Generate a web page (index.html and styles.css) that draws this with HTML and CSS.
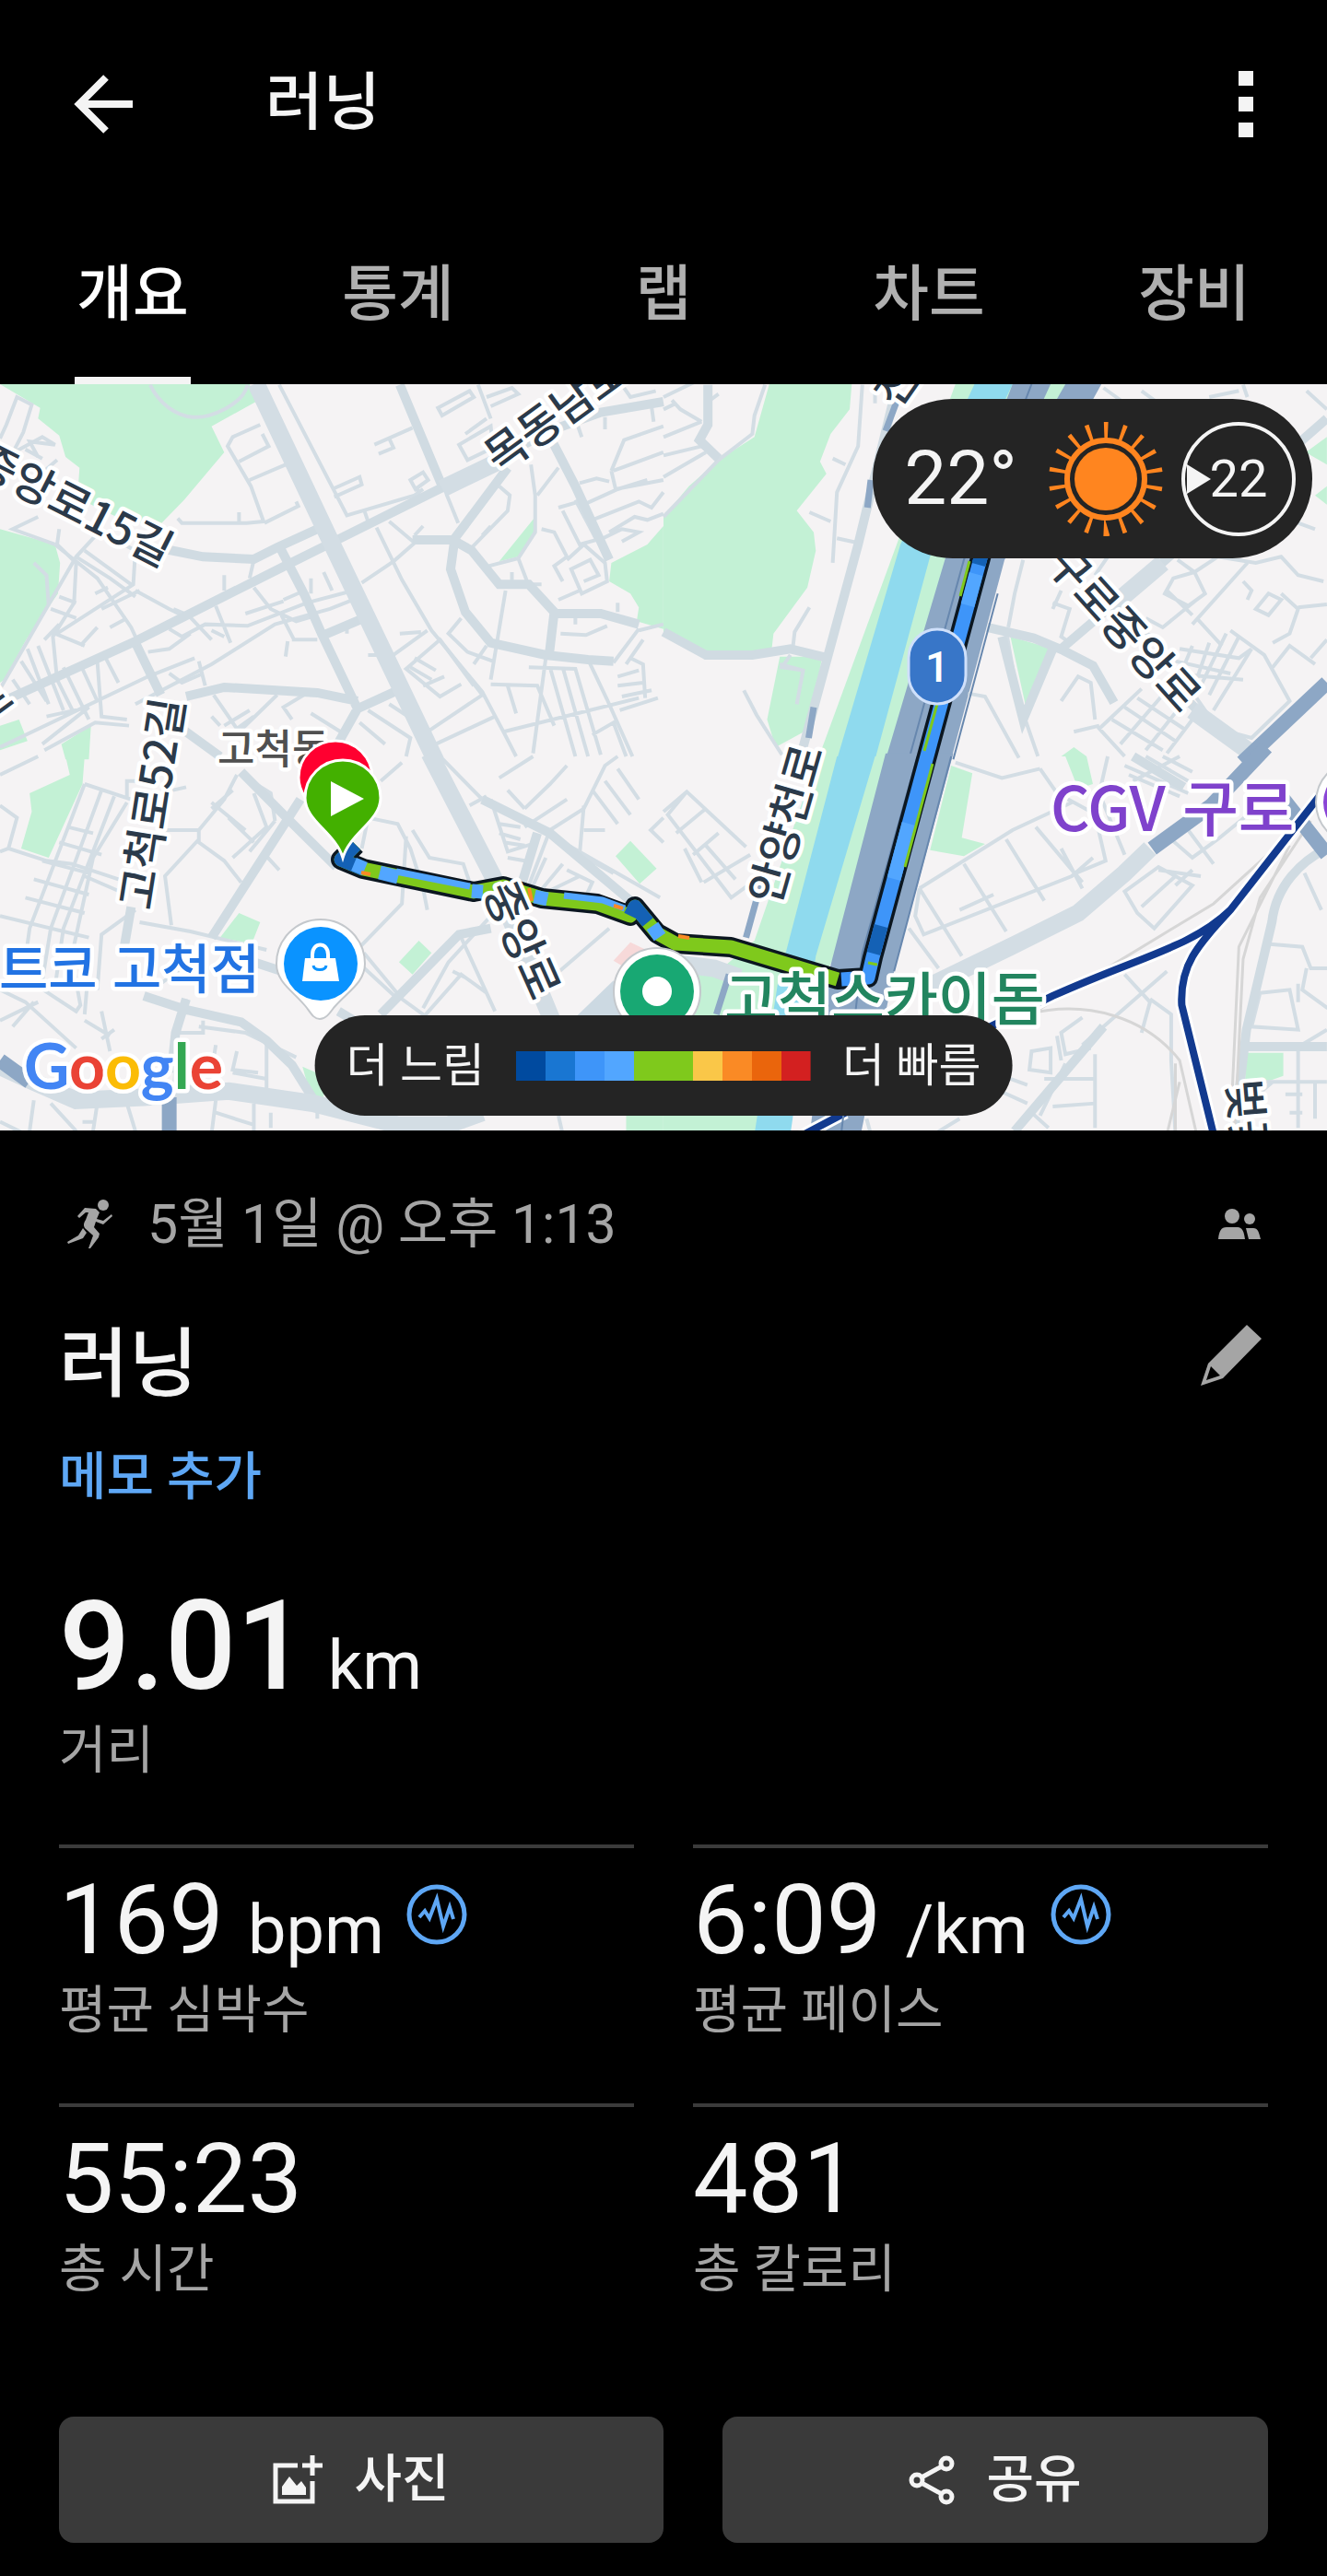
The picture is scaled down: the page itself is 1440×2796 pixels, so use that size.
FILE: index.html
```html
<!DOCTYPE html>
<html lang="ko">
<head>
  <meta charset="UTF-8">
  <meta name="viewport" content="width=device-width, initial-scale=1">
  <title>러닝</title>
  <link rel="stylesheet" href="styles.css">
</head>
<body>
  <header class="app-bar">
    <button class="icon-btn" aria-label="뒤로">
      <svg width="64" height="64" viewBox="0 0 64 64" fill="none" stroke="#f4f4f4" stroke-width="8">
        <path d="M64 32H6M35 3L6 32l29 29"/>
      </svg>
    </button>
    <h1 class="app-title">러닝</h1>
    <button class="icon-btn" aria-label="더보기">
      <svg width="16" height="72" viewBox="0 0 16 72" fill="#f4f4f4">
        <path d="M0 0h16v16H0zM0 28h16v16H0zM0 56h16v16H0z"/>
      </svg>
    </button>
  </header>

  <nav class="tabs">
    <a href="#" class="tab active"><span>개요</span></a>
    <a href="#" class="tab"><span>통계</span></a>
    <a href="#" class="tab"><span>랩</span></a>
    <a href="#" class="tab"><span>차트</span></a>
    <a href="#" class="tab"><span>장비</span></a>
  </nav>

  <section class="map">
    <svg class="map-canvas" viewBox="0 0 1440 810">
      <rect width="1440" height="810" fill="#f5f3f4"/>

      <!-- north west -->
      <g transform="translate(0 -6) scale(.4591 .3333)">
        <g class="park">
          <path d="M0 18L95 95l-5 35 50 55 15 70 33 35-3 60 15 50 90 60 85 20 60-85 95-155-30-85 105-80-15-57z"/>
          <path d="M0 490l130 50 12 60-5 100-75 150-52 130-10 10z"/>
          <path d="M1568 480l-38 60-85 60-5 60 50 40 20 45-5 45 63 25z"/>
          <path d="M1265 450l-85 145 45-15 35-60zM0 1130l45-20 20 70-65 30zM145 1190l70-60-5 110h-55z"/>
        </g>
        <g class="road">
          <path d="M30 290l-5-35 30-80 20-90-35-25-25 90-15 45M20 250l80-60 30 25-60-10 20 50M60 230l40 30M80 330l55-65M355 20c20 60 60 100 100 105s120-40 130-105"/>
          <path d="M615 150l-65 40-12 30 55 130 30 115-40 5H430l-10-15M565 470v-35M620 180l15 40-70 50M675 280l-85 50M625 470l80-55-5-15"/>
          <path d="M660 20l160 425 160-65 20-20M785 360l65-40 5 25-65 40M975 160l-90 55M920 195l10 30-35 20M970 330l30-25 12 25-30 30zM985 350l5 30M860 425l10 40M890 485l60 170 70 165 120 200 50 130 30 80M920 465l60 70-50 60-75 70"/>
          <path d="M1035 95l75-55 10 20-75 60zM1130 20l30 110M1150 60l60-30 15 20-65 40M1085 215l75-60 5 70-60 40zM1100 180l50-50"/>
          <path d="M1255 280l10 100v120l-40 85-70 25M1320 290l-50 90M1180 350l25 30-5 50-85 120M1140 510l20-30M980 510l20-30M1225 585l25 90M1055 375l28 95"/>
          <path d="M1370 340l40-15 30 10M1450 300l118-60M1445 300l30-100 93-45M1445 300l10 60 113-30M1380 410l80-50 70-30M1400 460l110-60 30 20 28-50M1320 420l50-20M1330 430l40 110 40-15-50-130M1440 500l60-50 30 10 38-20M1410 530l60-40 40 10-40 30M1280 490l30 10 30 80-30 30 20 50M1340 590l40-50 50 60 5 60-60 40-25-80 45-30 20 50-35 20M1320 720l50-30M1540 90l5 50M1430 165v-40M1375 190l-10-40M1470 20l20 40 60-20"/>
          <path d="M1325 830l60 5 50-30M1360 800v-50M1460 760v-30M1195 690l-35 290M1210 660v-30M1280 670h-60M1510 820l58-20M1450 925l60-110M1390 915l45 130 60 185M1250 940l110 5 60 280M1300 940l60 290M1330 940l60 290M1290 910l-30 310M1460 970l50-20M1460 1000l60-10M1465 1080l90-40M1470 1035l70-20M1480 930l40-80M1490 910l30 20 5 110M1190 1150l320-110M1400 1160l50-40 30 110M1160 995l110 5 40 130M1200 1000l20 90M1030 1190l140-90M1010 1150l130-120-100-180-80 95 80 90 50-40M1040 850l80 150M980 910l50 40M970 940l50 40M1000 1000l50-30M1010 820l-80 80M1090 780l-30 50 45 60 60 30M1120 930l30-60M945 830l50-5M1020 1150l-100-90"/>
          <path d="M410 750l35 20 55 80M320 690l80 60 30 20M430 780M400 815l30 25 55-40 100 5 140-75 110-40M320 1060l180-130 150-130 130-50 55-30M600 680l40 70 60 40 50-20M690 850h60M675 905l5-50M665 770l30 80M580 765l90-40M670 720l50-30M530 640v50M590 650l10-60M765 630l20 60M735 650v50M510 740l35 120M500 820l30 20M690 1110l-20-40 60-50M505 1030l60 120 90-120M735 1090l70 60M870 1080l100 90-10 60M910 1190l-60-70M820 810v20M870 900h30"/>
          <path d="M0 1010L180 580l60-90M130 540l100 110 80 160 30 90M130 540l-100-50 60-40M140 490l-5 50 45 60-5 130-50 110 10 140 40 110M180 580l80 70 60 60M240 500l80 60-5 110-180 160M200 560l110 110M330 690l-90 60M80 600l30 40 5 100M120 750l60 30M140 710l40 20M105 850l35-50M130 830l70 40M230 810l-40 60M65 880l50 180M90 870l60 210M150 940l60 170M190 930l40 120M230 920l10 180 60 10M250 910l30 80M0 1200l350-230 110-60M30 980l40 80M50 920l60 130M110 1100l100-30-110 120M400 960l30 30 50-30M470 920l15 80M530 1130l60-50M560 1140l40-40M500 1100l20 30M260 810l40-30M225 700l30-20M350 890l50-10 50-50M105 1210l120-90 80 10"/>
        </g>
        <g class="road mid">
          <path d="M945 20l100 330M390 555l90 25 120 8 55-38 95-60M660 545l60 160 40 125 85 245M320 860l60 170M845 1075l95-60M845 1075l-45 110M440 1035l90-30 220 18 95 27M860 780l-95 55M1200 290l-125 230-10 100 35 140 60 100 130 40 100 15 60 5M975 525h95l45 35 65 110h70l60 90-12 140M1310 765h110l90 35M1300 190l60 160 80 240M430 1140l90 90"/>
          <path d="M1568 75l-148 35-120 60-255 185-255 175-110 75-360 250-320 200"/>
        </g>
        <path class="road wide" d="M1190 262L1045 358M605 15l175 510 250 720"/>
      </g>

      <!-- north east -->
      <g transform="translate(720 -6) scale(.4591 .3333)">
        <g class="park">
          <path d="M250 18h195l-5 82-45 80-25 90 15 40-70 120 40 70 5 60-20 120-80 150-5 60-155 10L0 825V450l60-100 70-85 85-75z"/>
          <path d="M275 905h100l-30 235-80 60-20-90zM820 840l100 40-65 180zM1568 190l-50 50 50 40zM1540 380l28-30v60zM940 1230l30-30 30 30z"/>
          <path d="M690 18H960L560 1240H365z"/>
        </g>
        <path class="water" d="M735 18h90L630 580 500 1240h-90L560 540z"/>
        <path class="highway" d="M825 18h210L806 590 680 1240H525L665 590z"/>
        <path class="park" d="M915 18h35l-25 60h-30z"/>
        <g class="road">
          <path d="M0 60l90-60M0 100l30-20M20 70l20 30 50 40M0 190l90-50M0 250l90-30 40 45M0 320l100-80M110 70l20-20M240 20l-25 100-5 60-80 85L0 450M470 20l-10 200-50 150-10 230M500 20v60M400 260l30 20M345 435l50 30M410 520l50 15M345 745l-35 80-5 60"/>
          <path d="M190 1015l30 80 60 130M275 930l55 20-15 110M300 900l-20 40 50 10"/>
          <path d="M850 590l-20 110-15 110M810 820l20 160 25 130 30 120M720 1025l40 10 80 200M1050 580l-30 60M920 730l40 20-20 90 20 20 60-80M920 750l20-60"/>
          <path d="M1040 30l60 60M1130 40l50 50M1290 60l70-20M1370 20l10 40M1520 40l48 60"/>
          <path d="M1215 590l40 40 55-50 90 20 60-20 40 60 60 20M1185 700l20-50 50-20 25 70-40 40zM1140 780l40 30 80-90M1380 600l-130 200M1370 660l20 30-10 30M1400 750l30-50 30 20-30 50zM1460 700l40 50-20 80-40 30M1500 745l68-10M1260 780l60 90M1250 770l-60-80M1130 820l50 40M1500 470l40 20"/>
          <path d="M1220 880l140 30 30-30M1210 920l130 40M1200 960l170 20M1250 870l-30 100M1290 860l-30 120M1330 830l-60 170M1360 840l-70 190M1390 880l-90 200M1340 820l80 80 60 150-90 120-80-30-50-100M1130 1010l-100 130 60 90M1060 1110l120 100M1090 1070l120 110M1120 1040l110 100M1180 1030l-100 160M1220 1070l-80 140M1250 1110l-60 110M940 1050l40-80 30 20 10 120M970 1150l60-20M1440 940l40-70 60 60M1530 910l38-60"/>
        </g>
        <g class="road mid">
          <path d="M105 20v130l-20 50 45 60M545 60L460 540 330 1200M0 825l100 75h110l90-20 90 30M765 810l110 35 70 40 70 50 50 120M920 880l-70 230-50-270"/>
          <path d="M1568 130L1170 610 940 880M1240 1050l90 120"/>
        </g>
        <path class="road wide" d="M1180 600L1060 740M1250 1080l130 130"/>
        <path class="highway-line" d="M555 60l-30 110M490 330l-8 90M355 1070l-12 100"/>
        <path class="highway-line big" d="M1568 990l-200 260"/>
        <path class="lane" d="M870 18L710 590 580 1240M790 700L685 1240"/>
      </g>

      <!-- south west -->
      <g transform="translate(0 404) scale(.4591 .3333)">
        <path class="park" d="M155 0h45l-5 90-80 240-65-30 25-120-5-60 95-60zM565 510l50 30-20 70-75-20zM990 600l30 40-45 70-32-40zM1490 275l62 90-40 50-57-90zM715 1010l50 30v90l-30-20zM1480 1170h88v60h-88z"/>
        <path fill="#f7d9d9" d="M1490 605l60 40-40 70-60-50z"/>
        <path fill="#ccd9e2" d="M1450 730l-90 120h110z"/>
        <g class="road">
          <path d="M0 60l90-60M0 160l40 40-20 100 90 40 60 10 110 50M20 300l-20 10M200 90L70 560 50 760M200 90l110 50 130-40M240 110L120 560l-20 170M270 130l-120 430-20 190M300 150l-80 180-60 380M160 230l60 20M140 280l100 40M100 340l110 40M80 400l130 50M60 460l140 50M0 520l210 70M200 390l100 60M320 500l-80 80-10 180M390 240h80l60-100 30-80M470 240v40l60 60 40 70M540 200l60 80M600 120l30 110-80 100M500 150l80 90M470 270l-80 120 15 160M570 60l70 60 10 90M650 210l-60 100M620 310l40 60M500 170l50-60M330 540l120 30 180 60M370 750l60-60 60-50M300 140v-60h60"/>
          <path d="M900 80l50-60M870 200l70 20 30 80 30 130 10 70M870 200l-15 100M975 240l40 90 80 20 20 80M960 260l-10 220-120 170 110 140M860 640l90 150 60 60M1000 850l90-140 60 60 20 60M1090 590l60 180 20 60M1070 700l30 20M1180 490l-120 180-60 150"/>
          <path d="M1040 0l100 140 140 100 280 220M1110 160l40-30M1180 70l80-70M1160 140l40 170 70-30M1180 250l50 20M1190 280l50 10M1180 220l50 10M1200 330l40 10M1300 240l-50 180M1300 240l80-70 50-140 30-30M1240 170l60-80 40-60M1200 110l40 60M1380 160l-10 160 80 60M1380 240h50M1400 110l60 110M1430 80l60 110M1460 40l50 100M1290 330l-30 90M1330 350l-60 100M1370 390l-90 60M1340 370l60 40-20 60M1440 560l-160 190M1340 140l-100 90M1568 200l-30 40 30 40"/>
          <path d="M0 760l60 40 120 150M0 860l90-60M30 880l50-80M170 660l20 150-10 20-100-90M210 680l-10 160M240 830l20 130M200 860l60 50M240 920l30-30M440 790l-20 120-10 200M470 880l110 20 120 80M410 900h70v-40M510 940l-10 90M560 960l-10 60 60 10M630 920v180M550 1030l80 20M0 1190l60 40M120 1130l60 90M80 1120l-10 100M230 1130l-10 90M300 1130l20 90M510 1120l-10 110M600 1130v100M510 1160l90 40M640 1160v50M195 1190h30M1320 1170l10 60M750 1120v60"/>
        </g>
        <g class="road mid">
          <path d="M570 50l115 160 110 150M710 140L500 590M310 490l-20 160M340 780l100 45 130 40 60 60 60 80 50 110M440 790l-25 110-10 130M1160 560l-75 20L900 840M1140 140l160 110 190 220M1230 430l40-180M800 830l60 50M600 670l90 40"/>
        </g>
        <path class="road wide" d="M1015-10l150 400 140 470M0 1010l80 50 100 60 160-10 200-20 200 40 200 70h120l80-40"/>
        <path class="highway-line big" d="M0 990l70 70M400 1110v120"/>
      </g>

      <!-- south east -->
      <g transform="translate(720 404) scale(.4591 .3333)">
        <path class="park" d="M365 0h170L400 660l-60 180L280 1240H0V690l130 10 85-100zM680 30l50 25-25 210 55 20-50 40-80-20zM950 0h50l15 90-35 15zM1375 965h90v75l-40 20-50 40z"/>
        <path class="water" d="M410 0h90L360 650l-60 580h-85L270 740z"/>
        <path class="highway" d="M525-10h160L545 700 465 1240H345l50-560z"/>
        <path class="road wide" d="M0 670l120 20 60 30M610 760l210-140 160-110 110-130 60-80"/>
        <path class="highway-line" d="M245 340l-50 250M155 710l-30 130"/>
        <g class="road">
          <path d="M0 180l55-65 140 180M55 115L10 190l150 270 40-40M30 250l70-80M70 320l60-70M100 290l70 110M95 410l110-90M50 300l40 110"/>
          <path d="M605 430l220-190 140-90M605 430l100 220M605 430l-10 90 20 60 350-190 50-60M710 350l100 220M810 270l90 200M880 230l110 180M940 300l50 130M1015 160l30 180-70 40M650 690l-70-130M700 500l80-50M690 20l110 50 90-30M1050 0l-20 120 60 200M890 40l40 80 80 60"/>
          <path d="M1090 440l80-80 80 60-90 140-40-50zM1130 490l80-100M1210 420l40-50M1200 270l50 60 60-60M1310 270l80-90 10-80M1240 240l60 110M1170 370l100 20M1090 30l150 90M1110 80l110-80M1100 60l120 70M1140 0l100 80M1180 0l70 50"/>
          <path d="M1090 710l60 90-20 100M1190 700l-150 180-50 60M1150 790l50 50v150l10 240M990 850l-50 50 10 70 60-20M870 960l-5 60 50 10v-80zM930 910l10 80M950 1000l-60 170M1020 970v240M900 1050h120M920 1140l100-10M780 1080l80 50M800 1040l60 30M700 1180l-60 50M870 1160l40 50M480 1180l10 50"/>
          <path d="M1420 610l90 10 20 70h40M1520 690l-10 70 60 60M1410 770l70-10 20 130-110-10zM1500 740v60M1568 890l-60 50M1380 1060h188M1500 950v260M1440 1060l-60 70M1540 1060v120M1470 1100h40M1480 1160h30M1515 380l40 120"/>
        </g>
        <path class="road mid" d="M1040 880L830 1220M1568 300c-60 40-120 120-130 240l-60 350-30 340M1370 945h198M1110 0l120 100"/>
        <g class="rail">
          <path d="M1530 210l-120 250-40 200-20 570M1500 230l-200 250-420 350M1480 290l-120 330-20 600M860 840c140-50 280 10 360 150l40 240M1210 1000v230M1190 1230l30-170"/>
        </g>
        <path class="highway-line big" d="M1425-30l-130 190-140 140M1460 130l108 190"/>
        <g class="metro-case"><path d="M1550 130l-210 370c-90 120-210 150-420 280l-170 115M1340 500c-80 120-120 180-115 310l75 420M430 1160l-110 80"/></g>
        <g class="metro"><path d="M1550 130l-210 370c-90 120-210 150-420 280l-170 115M1340 500c-80 120-120 180-115 310l75 420M430 1160l-110 80"/></g>
        <path class="lane" d="M600 0L470 640l-50 590M680 0L545 700"/>
      </g>

      <!-- route coloured by pace -->
      <g fill="none" stroke-linejoin="round">
        <path stroke="#0b1620" stroke-width="22" d="M386 500l-16 16 24 10 120 25 32-6 42 13 60 6 36 13 5-10 24 29 20 11 60 4 116 35 33-2 5-22L1068 174"/>
        <path stroke="#7fc91c" stroke-width="15" d="M386 500l-16 16 24 10 120 25 32-6 42 13 60 6 36 13 5-10 24 29 20 11 60 4 116 35"/>
        <path stroke="#3e95f9" stroke-width="15" d="M913 646l29-2 5-22L1068 174"/>
        <path stroke="#1461b5" stroke-width="15" d="M386 500l-16 16 24 10M684 577l5-10 14 17M948 618l8-30M1062 196l6-22"/>
        <path stroke="#52a6ff" stroke-width="15" d="M384 521l12 5M412 530l20 5M512 550l12 1M580 556l14 3M708 588l8 12M970 537l16-60M1050 240l9-34"/>
        <path stroke="#52a6ff" stroke-width="7" d="M430 529l80 16M612 555l42 5 24 9"/>
        <path stroke="#7fc91c" stroke-width="3" d="M1012 412l-30 112M1003 398l22-80M1042 230l10-38M952 630l-10-2"/>
        <path stroke="#fa8a25" stroke-width="4" d="M392 530l10 2M666 566l10 3M736 599l12 2M574 547l3 14"/>
      </g>

      <g class="street">
        <text transform="translate(-30 94) rotate(27)">중앙로15길</text>
        <text transform="translate(164 572) rotate(-81)">고척로52길</text>
        <text transform="translate(-18 372) rotate(-36)">로</text>
        <text transform="translate(542 98) rotate(-36)">목동남로</text>
        <text transform="translate(974 28) rotate(-55)">천로</text>
        <text transform="translate(1133 195) rotate(48)">구로중앙로</text>
        <text transform="translate(845 567) rotate(-74)">안양천로</text>
        <text transform="translate(524 550) rotate(66)">중앙로</text>
        <text transform="translate(1332 756) rotate(85)">벚꽃</text>
      </g>
      <text class="place area" x="236" y="412">고척동</text>
      <text class="place shop" x="282" y="656" text-anchor="end">트코 고척점</text>
      <text class="place cinema" x="1140" y="485">CGV 구로</text>
      <text class="place dome" x="786" y="690">고척스카이돔</text>

      <!-- road shield -->
      <rect x="986" y="266" width="62" height="81" rx="31" fill="#3876c8" stroke="#cfe0fb" stroke-width="3"/>
      <text class="shield" x="1017" y="323" text-anchor="middle">1</text>

      <!-- shop, dome and cinema markers -->
      <path fill="#fff" stroke="#c4c8cc" stroke-width="2" d="M347 689c-6 0-9-5-14-12-14-18-33-27-33-48a48 48 0 0 1 96 0c0 21-20 31-34 48-5 7-9 12-15 12z"/>
      <circle cx="348" cy="629" r="40" fill="#0a93ff"/>
      <path fill="#fff" d="M331 623h33l4 25h-40z"/>
      <path fill="none" stroke="#fff" stroke-width="4" d="M339 625v-6c0-14 17-14 17 0v6"/>
      <path fill="none" stroke="#0a93ff" stroke-width="3" d="M340 631c1 6 13 6 14 0"/>
      <circle cx="713" cy="659" r="47" fill="#fff" stroke="#c4c8cc" stroke-width="2"/>
      <circle cx="713" cy="659" r="40" fill="#18a873"/>
      <circle cx="713" cy="659" r="16" fill="#fff"/>
      <circle cx="1474" cy="454" r="46" fill="#fff" stroke="#c4c8cc" stroke-width="2"/>
      <circle cx="1474" cy="454" r="38" fill="#8a45d6"/>

      <!-- finish and start pins -->
      <path fill="#ff0030" stroke="#fff" stroke-width="3" d="M364 492c-8-22-40-38-40-65a40 40 0 0 1 80 0c0 27-32 43-40 65z"/>
      <path fill="#43b000" stroke="#fff" stroke-width="3" d="M372 514c-8-27-41-40-41-65a41 41 0 0 1 82 0c0 25-33 38-41 65z"/>
      <path fill="#fff" d="M359 431l36 19-36 19z"/>

      <text class="brand" x="26" y="765"><tspan fill="#4285f4">G</tspan><tspan fill="#ea4335">o</tspan><tspan fill="#fbbc05">o</tspan><tspan fill="#4285f4">g</tspan><tspan fill="#34a853">l</tspan><tspan fill="#ea4335">e</tspan></text>
    </svg>

    <div class="weather">
      <span class="temp">22°</span>
      <svg width="128" height="128" viewBox="-64 -64 128 128" fill="none" stroke="#ff851f">
        <circle r="53" stroke-width="18" pathLength="72" stroke-dasharray="0.9 3.1" transform="rotate(-92)"/>
        <circle r="42" stroke-width="6"/>
        <circle r="34" fill="#ff851f" stroke="none"/>
      </svg>
      <span class="wind">22
        <svg class="wind-dial" viewBox="0 0 124 124" fill="none">
          <circle cx="62" cy="62" r="60" stroke="#f4f4f4" stroke-width="4"/>
          <path d="M6 46l26 16L6 78z" fill="#f4f4f4"/>
        </svg>
      </span>
    </div>

    <div class="legend">
      <span>더 느림</span>
      <svg class="legend-bar" width="320" height="32" viewBox="0 0 10 1" preserveAspectRatio="none" shape-rendering="crispEdges">
        <rect x="0" width="1" height="1" fill="#004a9f"/>
        <rect x="1" width="1" height="1" fill="#1976d2"/>
        <rect x="2" width="1" height="1" fill="#3e95f9"/>
        <rect x="3" width="1" height="1" fill="#52a6ff"/>
        <rect x="4" width="2" height="1" fill="#7fc91c"/>
        <rect x="6" width="1" height="1" fill="#fac748"/>
        <rect x="7" width="1" height="1" fill="#fa8a25"/>
        <rect x="8" width="1" height="1" fill="#ea650c"/>
        <rect x="9" width="1" height="1" fill="#d32020"/>
      </svg>
      <span>더 빠름</span>
    </div>
  </section>

  <main class="details">
    <div class="date-row">
      <svg width="52" height="56" viewBox="72 70 52 56" fill="#a5a5a5">
        <circle cx="112" cy="77" r="6"/>
        <path d="M84 89l8-9 12 1 4 4-3 7 7 2 9-7 1 2-10 9-8-3-2 6 6 7-1 4-9 12h-2l5-14-9-8c-2-3-1-6 1-9l3-8h-3l-7 6zM90 102l4 5-4 6-16 6-1-2 12-7z"/>
      </svg>
      <p class="date">5월 1일 @ 오후 1:13</p>
      <svg class="privacy" width="46" height="34" viewBox="0 0 46 34" fill="#a5a5a5">
        <circle cx="15" cy="8" r="8"/>
        <circle cx="34" cy="11" r="6"/>
        <path d="M0 33c1-9 3-13 9-13h12c5 0 7 5 8 13zM30 21h8c5 0 6 4 8 12H33z"/>
      </svg>
    </div>

    <div class="title-row">
      <h2 class="activity-title">러닝</h2>
      <button class="icon-btn edit" aria-label="편집">
        <svg width="66" height="66" viewBox="0 0 66 66" fill="#a5a5a5">
          <path fill-rule="evenodd" d="M50 0l16 15-42 43-24 8 8-24zM11 45L6 60l15-5z"/>
        </svg>
      </button>
    </div>
    <a href="#" class="memo">메모 추가</a>

    <p class="distance">9.01 <span class="unit">km</span></p>
    <p class="label">거리</p>

    <div class="stats">
      <div class="stat">
        <p class="value"><span>169 <span class="unit">bpm</span></span>
          <svg class="zone-icon" width="66" height="66" viewBox="0 0 66 66" fill="none" stroke="#5ea7f5" stroke-width="5">
            <circle cx="33" cy="33" r="30"/>
            <path stroke-width="4" d="M14 36l6-7 5 8 8-21 7 30 7-21 4 13"/>
          </svg>
        </p>
        <p class="label">평균 심박수</p>
      </div>
      <div class="stat">
        <p class="value"><span>6:09 <span class="unit">/km</span></span>
          <svg class="zone-icon" width="66" height="66" viewBox="0 0 66 66" fill="none" stroke="#5ea7f5" stroke-width="5">
            <circle cx="33" cy="33" r="30"/>
            <path stroke-width="4" d="M14 36l6-7 5 8 8-21 7 30 7-21 4 13"/>
          </svg>
        </p>
        <p class="label">평균 페이스</p>
      </div>
      <div class="stat">
        <p class="value">55:23</p>
        <p class="label">총 시간</p>
      </div>
      <div class="stat">
        <p class="value">481</p>
        <p class="label">총 칼로리</p>
      </div>
    </div>

    <div class="actions">
      <button class="btn">
        <svg width="54" height="54" viewBox="0 0 54 54" fill="none" stroke="#f4f4f4" stroke-width="5">
          <path d="M27 11H3v39h40V28M43 0v22M32 11h22"/>
          <path fill="#f4f4f4" stroke="none" d="M10 43V34l8-11 8 10 5-5 5 7v8z"/>
        </svg>
        사진
      </button>
      <button class="btn">
        <svg width="50" height="54" viewBox="0 0 50 54" fill="none" stroke="#f4f4f4" stroke-width="5">
          <circle cx="41" cy="9" r="6"/>
          <circle cx="9" cy="27" r="6"/>
          <circle cx="41" cy="45" r="6"/>
          <path d="M14 24l22-12M14 30l22 12"/>
        </svg>
        공유
      </button>
    </div>
  </main>
</body>
</html>
```

FILE: styles.css
```css
* {
  box-sizing: border-box;
}

body {
  margin: 0;
  background: #000;
  color: #f4f4f4;
  font-family: Roboto, "Noto Sans CJK KR", sans-serif;
  line-height: 1.2;
}

h1, h2, p {
  margin: 0;
}

button {
  font-family: inherit;
  line-height: inherit;
  color: inherit;
  border: none;
  cursor: pointer;
}

svg {
  display: block;
  flex-shrink: 0;
}

.icon-btn {
  padding: 0;
  background: none;
}

/* top bar */
.app-bar {
  display: flex;
  align-items: center;
  height: 225px;
  padding: 0 80px;
}

.app-title {
  flex: 1;
  margin-left: 144px;
  font-size: 68px;
  font-weight: 500;
}

.tabs {
  display: grid;
  grid-template-columns: repeat(5, 1fr);
}

.tab {
  display: flex;
  justify-content: center;
  color: #b0b0b0;
  font-size: 66px;
  font-weight: 500;
  line-height: 178px;
  text-decoration: none;
}

.tab span {
  padding: 6px 2px 0;
  border-bottom: 8px solid transparent;
}

.tab.active {
  color: #fff;
}

.tab.active span {
  border-color: #f4f4f4;
}

/* map */
.map {
  position: relative;
  overflow: hidden;
}

.map-canvas {
  width: 100%;
  height: auto;
}

.park {
  fill: #c3f1d5;
}

.water {
  fill: #8fdaee;
}

.highway {
  fill: #8da7c5;
}

.road path,
path.road,
.lane,
.highway-line,
.rail path,
.metro path,
.metro-case path {
  fill: none;
  vector-effect: non-scaling-stroke;
}

.road path {
  stroke: #d3dde4;
  stroke-width: 4px;
}

.road.mid path,
path.road.mid {
  stroke: #d0dbe2;
  stroke-width: 10px;
}

path.road.wide {
  stroke: #d3dde4;
  stroke-width: 19px;
}

.highway-line {
  stroke: #8da7c5;
  stroke-width: 7px;
}

.highway-line.big {
  stroke-width: 16px;
}

.lane {
  stroke: #6787ae;
  stroke-width: 2px;
}

.rail path {
  stroke: #d6d6d6;
  stroke-width: 3px;
}

.metro path {
  stroke: #123a8f;
  stroke-width: 8px;
}

.metro-case path {
  stroke: #fff;
  stroke-width: 14px;
}

.street text,
.place,
.brand {
  font-family: "Noto Sans CJK KR", sans-serif;
  paint-order: stroke;
  stroke: #fff;
  stroke-width: 9px;
  stroke-linejoin: round;
}

.street text {
  fill: #2b3a4a;
  font-size: 48px;
  font-weight: 500;
}

.area {
  fill: #505050;
  font-size: 44px;
  font-weight: 500;
}

.shop {
  fill: #2273e3;
  font-size: 58px;
  font-weight: 500;
}

.cinema {
  fill: #7f42cc;
  font-size: 66px;
  font-weight: 500;
}

.dome {
  fill: #22855f;
  font-size: 63px;
  font-weight: 500;
}

.shield {
  fill: #fff;
  font-size: 46px;
  font-weight: 500;
}

.brand {
  font-family: Lato, sans-serif;
  font-size: 68px;
  font-weight: 700;
}

.weather {
  position: absolute;
  top: 16px;
  right: 16px;
  display: flex;
  align-items: center;
  gap: 18px;
  height: 173px;
  padding: 0 18px 0 34px;
  border-radius: 87px;
  background: #242424;
}

.temp {
  margin-right: 14px;
  font-size: 82px;
}

.wind {
  position: relative;
  width: 124px;
  font-size: 56px;
  line-height: 124px;
  text-align: center;
}

.wind-dial {
  position: absolute;
  inset: 0;
}

.legend {
  position: absolute;
  bottom: 16px;
  left: 50%;
  transform: translateX(-50%);
  display: flex;
  align-items: center;
  gap: 34px;
  height: 109px;
  padding: 0 34px;
  border-radius: 55px;
  background: #242424;
  font-size: 50px;
  white-space: nowrap;
}

/* activity details */
.details {
  padding: 62px 64px 32px;
}

.date-row {
  display: flex;
  align-items: center;
  padding: 0 8px;
  color: #a5a5a5;
}

.date {
  flex: 1;
  margin-left: 36px;
  font-size: 59px;
  line-height: 80px;
}

.title-row {
  display: flex;
  justify-content: space-between;
  align-items: center;
  margin: 64px 0 38px;
}

.activity-title {
  font-size: 82px;
  font-weight: 500;
  line-height: 96px;
}

.edit {
  margin: 0 7px 20px 0;
}

.memo {
  display: block;
  width: max-content;
  color: #5ea7f5;
  font-size: 56px;
  font-weight: 500;
  line-height: 72px;
  text-decoration: none;
}

.distance {
  display: flex;
  align-items: baseline;
  gap: 22px;
  margin-top: 80px;
  font-size: 136px;
  font-weight: 500;
  line-height: 136px;
}

.unit {
  font-size: 74px;
  font-weight: 400;
  line-height: 1;
}

.label {
  margin-top: 9px;
  color: #a5a5a5;
  font-size: 56px;
  line-height: 72px;
}

.stats {
  display: grid;
  grid-template-columns: 1fr 1fr;
  gap: 65px 64px;
  margin-top: 66px;
}

.stat {
  padding-top: 25px;
  border-top: 4px solid #3b3b3b;
}

.value {
  display: flex;
  gap: 24px;
  font-size: 106px;
  line-height: 106px;
}

.zone-icon {
  margin-top: 14px;
}

.actions {
  display: grid;
  grid-template-columns: 41fr 37fr;
  gap: 64px;
  margin-top: 124px;
}

.btn {
  display: flex;
  align-items: center;
  justify-content: center;
  gap: 34px;
  height: 137px;
  border-radius: 16px;
  background: #3a3a3a;
  font-size: 56px;
  font-weight: 500;
}
```
